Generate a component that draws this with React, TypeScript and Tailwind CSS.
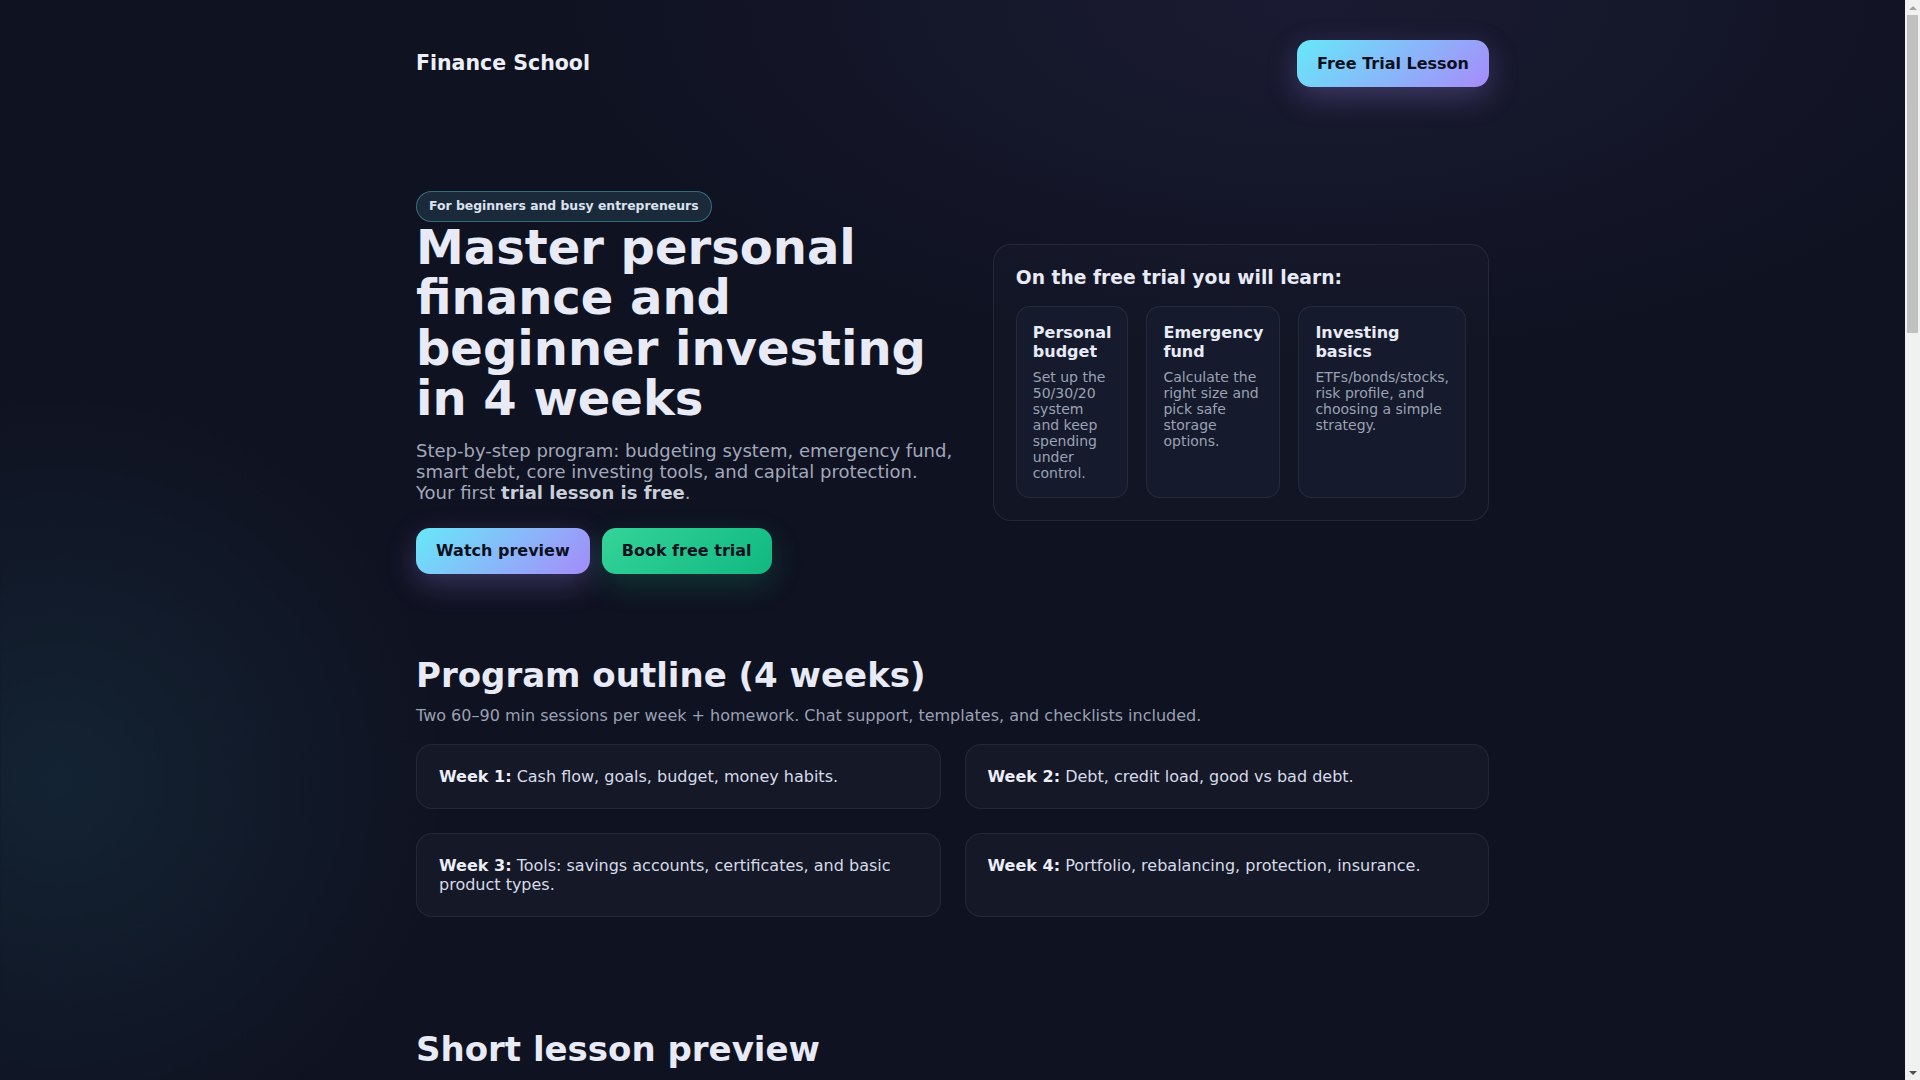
import React from "react";

const learnItems = [
  { title: "Personal budget", text: "Set up the 50/30/20 system and keep spending under control." },
  { title: "Emergency fund", text: "Calculate the right size and pick safe storage options." },
  { title: "Investing basics", text: "ETFs/bonds/stocks, risk profile, and choosing a simple strategy." },
];

const weeks = [
  { label: "Week 1:", text: "Cash flow, goals, budget, money habits." },
  { label: "Week 2:", text: "Debt, credit load, good vs bad debt." },
  { label: "Week 3:", text: "Tools: savings accounts, certificates, and basic product types." },
  { label: "Week 4:", text: "Portfolio, rebalancing, protection, insurance." },
];

const plans = [
  { name: "Self-paced", price: "$49", text: "Recorded lessons, templates and checklists." },
  { name: "With mentor", price: "$129", text: "Live sessions, homework review and chat support." },
  { name: "Personal", price: "$299", text: "One-on-one plan built around your goals." },
];

const reviews = [
  { name: "Anna, designer", text: "Finally built a budget I actually follow. The emergency fund lesson changed how I save." },
  { name: "Mark, founder", text: "Clear explanations of ETFs and bonds without jargon. Perfect for a busy schedule." },
  { name: "Kate, marketer", text: "The templates and checklists alone were worth it. Now I invest every month." },
];

const faqs = [
  { q: "Do I need any prior knowledge?", a: "No. The course starts from the basics and builds step by step." },
  { q: "How much time does it take?", a: "Two 60–90 minute sessions per week plus short homework." },
  { q: "Is the trial lesson really free?", a: "Yes. You can join the first lesson without paying anything." },
  { q: "Will I get materials after the course?", a: "All templates, checklists and recordings stay available to you." },
];

function Scrollbar() {
  return (
    <div className="fixed right-0 top-0 flex h-screen w-[15px] flex-col bg-[#f1f1f1]">
      <div className="flex h-[15px] items-center justify-center">
        <div className="h-0 w-0 border-b-[4px] border-l-[4px] border-r-[4px] border-b-[#a3a3a3] border-l-transparent border-r-transparent" />
      </div>
      <div className="mx-[2px] h-[318px] bg-[#c1c1c1]" />
      <div className="flex-1" />
      <div className="flex h-[15px] items-center justify-center">
        <div className="h-0 w-0 border-l-[4px] border-r-[4px] border-t-[4px] border-l-transparent border-r-transparent border-t-[#505050]" />
      </div>
    </div>
  );
}

export default function App() {
  return (
    <div className="min-h-screen bg-[#0f1221] font-['DejaVu_Sans',sans-serif] text-[#e8eaf6]">
      <div className="min-h-screen pr-[15px] bg-[radial-gradient(circle_520px_at_60px_780px,rgba(48,150,170,0.13),transparent_75%),radial-gradient(1000px_480px_at_68%_0px,rgba(140,120,230,0.085),transparent_75%)]">
        <div className="mx-auto w-full max-w-[1121px] px-6">
          <header className="flex items-center justify-between pt-10">
            <div className="text-[20.5px] font-bold text-[#eceef8]">Finance School</div>
            <button className="flex h-[47px] items-center rounded-[14px] bg-[linear-gradient(135deg,#67e8f9,#a78bfa)] px-5 text-[16px] font-bold text-[#0b1020] shadow-[0_10px_30px_rgba(167,139,250,0.28)]">
              Free Trial Lesson
            </button>
          </header>

          <section className="mt-[104px] grid grid-cols-[1.1fr_1fr] items-center gap-8">
            <div>
              <div className="inline-flex h-[31px] items-center rounded-full border border-[rgba(103,232,249,0.35)] bg-[#1b2a3b] px-[12px] text-[12.4px] font-bold text-[#dbe2ee]">
                For beginners and busy entrepreneurs
              </div>
              <h1 className="text-[48px] font-bold leading-[1.05] text-[#e8eaf6]">
                Master personal finance and beginner investing in 4 weeks
              </h1>
              <p className="mt-4 text-[18px] leading-[21.4px] text-[#a2a8ba]">
                Step-by-step program: budgeting system, emergency fund, smart debt, core investing tools, and capital protection. Your first{" "}
                <strong className="font-bold text-[#c9cedb]">trial lesson is free</strong>.
              </p>
              <div className="mt-6 flex gap-3">
                <button className="flex h-[46px] items-center rounded-[14px] bg-[linear-gradient(135deg,#67e8f9,#a78bfa)] px-5 text-[16px] font-bold text-[#0b1020] shadow-[0_10px_30px_rgba(167,139,250,0.28)]">
                  Watch preview
                </button>
                <button className="flex h-[46px] items-center rounded-[14px] bg-[linear-gradient(135deg,#34d399,#10b981)] px-5 text-[16px] font-bold text-[#0b1020] shadow-[0_10px_30px_rgba(16,185,129,0.22)]">
                  Book free trial
                </button>
              </div>
            </div>

            <div className="rounded-[18px] border border-white/[0.07] bg-white/[0.015] p-[22px]">
              <h3 className="mb-[17px] text-[18.72px] font-bold leading-[22px] text-[#e8eaf6]">On the free trial you will learn:</h3>
              <div className="grid grid-cols-[repeat(3,auto)] gap-[18px]">
                {learnItems.map((it) => (
                  <div key={it.title} className="rounded-[14px] border border-white/[0.07] bg-[#151a2c] p-4">
                    <div className="text-[16px] font-bold leading-[19.2px] text-[#e8eaf6]">{it.title}</div>
                    <div className="mt-2 text-[14px] leading-[16px] text-[#9ba2b4]">{it.text}</div>
                  </div>
                ))}
              </div>
            </div>
          </section>

          <section className="pt-[81px]">
            <h2 className="text-[34px] font-bold leading-[1.2] text-[#e8eaf6]">Program outline (4 weeks)</h2>
            <p className="mt-2 text-[16px] leading-6 text-[#9aa1b3]">
              Two 60–90 min sessions per week + homework. Chat support, templates, and checklists included.
            </p>
            <div className="mt-4 grid grid-cols-2 gap-6">
              {weeks.map((w) => (
                <div key={w.label} className="rounded-[16px] border border-white/[0.07] bg-[#141827] px-[22px] py-[22px] text-[16px] leading-[19.2px] text-[#d7dbe7]">
                  <strong className="font-bold text-[#eceef8]">{w.label}</strong> {w.text}
                </div>
              ))}
            </div>
          </section>

          <section className="pt-[112px]">
            <h2 className="text-[34px] font-bold leading-[1.2] text-[#e8eaf6]">Short lesson preview</h2>
            <p className="mt-2 text-[16px] leading-6 text-[#9aa1b3]">
              A 5-minute fragment from the first lesson: how to build a simple monthly budget.
            </p>
            <div className="mt-4 flex h-[640px] items-center justify-center rounded-[18px] border border-white/[0.07] bg-[#141827]">
              <div className="flex h-20 w-20 items-center justify-center rounded-full bg-[linear-gradient(135deg,#67e8f9,#a78bfa)]">
                <svg width="28" height="28" viewBox="0 0 24 24" fill="#0b1020">
                  <path d="M8 5v14l11-7z" />
                </svg>
              </div>
            </div>
          </section>

          <section className="pt-[112px]">
            <h2 className="text-[34px] font-bold leading-[1.2] text-[#e8eaf6]">Pricing</h2>
            <p className="mt-2 text-[16px] leading-6 text-[#9aa1b3]">Choose the format that fits your schedule.</p>
            <div className="mt-4 grid grid-cols-3 gap-6">
              {plans.map((p) => (
                <div key={p.name} className="flex h-[300px] flex-col rounded-[16px] border border-white/[0.07] bg-[#141827] p-6">
                  <div className="text-[18px] font-bold">{p.name}</div>
                  <div className="mt-3 text-[34px] font-bold">{p.price}</div>
                  <div className="mt-3 text-[15px] text-[#9aa1b3]">{p.text}</div>
                  <button className="mt-auto h-[46px] rounded-[14px] bg-[linear-gradient(135deg,#34d399,#10b981)] text-[16px] font-bold text-[#0b1020]">
                    Choose plan
                  </button>
                </div>
              ))}
            </div>
          </section>

          <section className="pt-[112px]">
            <h2 className="text-[34px] font-bold leading-[1.2] text-[#e8eaf6]">What students say</h2>
            <p className="mt-2 text-[16px] leading-6 text-[#9aa1b3]">Real feedback from people who finished the program.</p>
            <div className="mt-4 grid grid-cols-3 gap-6">
              {reviews.map((r) => (
                <div key={r.name} className="h-[280px] rounded-[16px] border border-white/[0.07] bg-[#141827] p-6">
                  <div className="text-[15px] leading-6 text-[#d7dbe7]">“{r.text}”</div>
                  <div className="mt-4 text-[14px] font-bold text-[#9aa1b3]">{r.name}</div>
                </div>
              ))}
            </div>
          </section>

          <section className="pt-[112px]">
            <h2 className="text-[34px] font-bold leading-[1.2] text-[#e8eaf6]">FAQ</h2>
            <div className="mt-6 flex flex-col gap-4">
              {faqs.map((f) => (
                <div key={f.q} className="rounded-[16px] border border-white/[0.07] bg-[#141827] p-[22px]">
                  <div className="text-[16px] font-bold">{f.q}</div>
                  <div className="mt-2 text-[15px] text-[#9aa1b3]">{f.a}</div>
                </div>
              ))}
            </div>
          </section>

          <footer className="mt-[112px] flex items-center justify-between border-t border-white/[0.07] py-12 text-[14px] text-[#8a91a3]">
            <span>© 2024 Finance School</span>
            <span>Privacy · Terms · Contacts</span>
          </footer>
        </div>
      </div>
      <Scrollbar />
    </div>
  );
}
